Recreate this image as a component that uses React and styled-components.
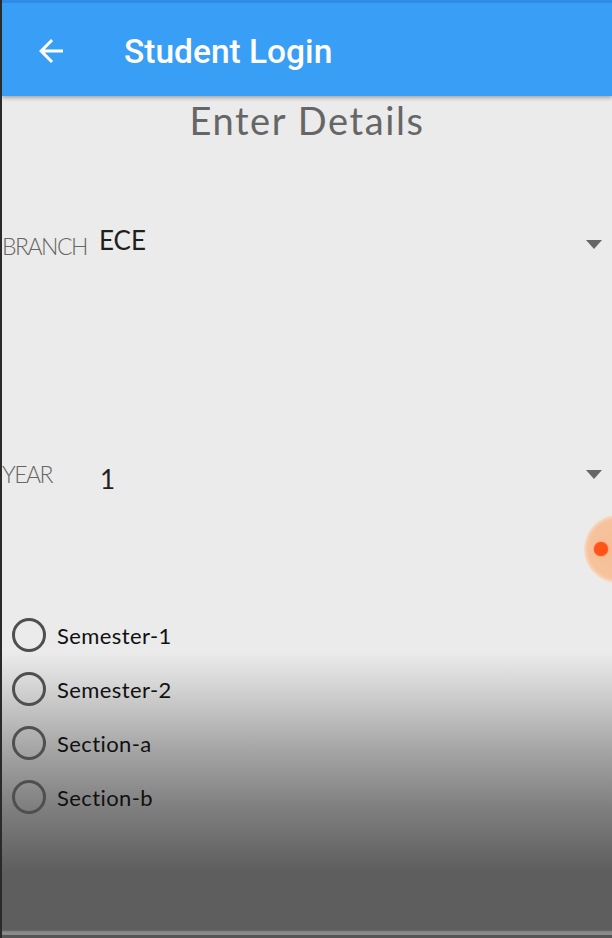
import React from "react";
import styled, { createGlobalStyle } from "styled-components";

const GlobalStyle = createGlobalStyle`
  html, body {
    margin: 0;
    padding: 0;
    background: #5d5d5d;
  }
  * { box-sizing: border-box; }
`;

const Screen = styled.div`
  width: 612px;
  height: 938px;
  display: flex;
  flex-direction: column;
  border-left: 2px solid #2a2a2a;
  overflow: hidden;
  position: relative;
`;

const AppBar = styled.header`
  height: 96px;
  flex-shrink: 0;
  display: flex;
  align-items: center;
  padding-left: 31px;
  background: #399ef5;
  border-top: 3px solid #2f8be8;
  box-shadow: 0 2px 4px rgba(0, 0, 0, 0.3);
  position: relative;
  z-index: 2;
`;

const BackButton = styled.button`
  border: none;
  background: none;
  padding: 0;
  width: 36px;
  height: 36px;
  display: flex;
  align-items: center;
  justify-content: center;
  margin-right: 55px;
  margin-top: 2px;
`;

const Title = styled.h1`
  margin: 0;
  font-family: Roboto, "Liberation Sans", sans-serif;
  font-weight: 500;
  font-size: 33.5px;
  color: #ffffff;
  margin-top: 3px;
`;

const Body = styled.main`
  flex: 1;
  display: flex;
  flex-direction: column;
  position: relative;
  background: linear-gradient(
    to bottom,
    #ebebeb 0,
    #ebebeb 556px,
    #d8d8d8 585px,
    #a8a8a8 650px,
    #808080 710px,
    #5e5e5e 775px,
    #5e5e5e 834px,
    #8a8a8a 836px,
    #8a8a8a 839px,
    #555 839px
  );
`;

const Heading = styled.h2`
  margin: 2px 0 0;
  text-align: center;
  font-family: Lato, "Open Sans", sans-serif;
  font-weight: 400;
  font-size: 38px;
  line-height: 44px;
  letter-spacing: 1.6px;
  color: #666666;
`;

const FieldRow = styled.div`
  display: flex;
  align-items: flex-start;
  height: 34px;
  margin-top: ${(p) => p.$top}px;
  padding-right: 10px;
`;

const FieldLabel = styled.span`
  font-family: Lato, "Open Sans", sans-serif;
  font-weight: 300;
  font-size: 23px;
  letter-spacing: -1.5px;
  color: #666;
  width: ${(p) => p.$width}px;
  margin-top: ${(p) => p.$shift}px;
  flex-shrink: 0;
`;

const FieldValue = styled.span`
  flex: 1;
  font-family: Lato, "Open Sans", sans-serif;
  font-weight: 400;
  font-size: 26px;
  color: #1f1f1f;
  margin-top: ${(p) => p.$shift}px;
`;

const Caret = styled.span`
  width: 0;
  height: 0;
  border-left: 8px solid transparent;
  border-right: 8px solid transparent;
  border-top: 9px solid #666;
  margin-top: ${(p) => p.$shift}px;
`;

const Indicator = styled.div`
  position: absolute;
  right: -40px;
  top: 419px;
  width: 68px;
  height: 68px;
  border-radius: 50%;
  background: radial-gradient(circle, #f5bd93 0, #f6c39e 30px, #f8dcc6 34px);
`;

const IndicatorDot = styled.span`
  position: absolute;
  left: 10px;
  top: 27px;
  width: 14px;
  height: 14px;
  border-radius: 50%;
  background: #ff5418;
  box-shadow: 0 0 2px #ff6a2a;
`;

const RadioList = styled.div`
  display: flex;
  flex-direction: column;
  gap: 22px;
  margin-top: 127px;
  padding-left: 10px;
`;

const RadioRow = styled.label`
  display: flex;
  align-items: center;
  height: 32px;
`;

const RadioCircle = styled.span`
  width: 34px;
  height: 34px;
  border-radius: 50%;
  border: 3px solid #4f4f4f;
  margin-right: 11px;
  flex-shrink: 0;
`;

const RadioText = styled.span`
  font-family: Lato, "Open Sans", sans-serif;
  font-weight: 400;
  font-size: 22px;
  letter-spacing: 0.4px;
  color: #111;
`;

const options = ["Semester-1", "Semester-2", "Section-a", "Section-b"];

export default function App() {
  return (
    <>
      <GlobalStyle />
      <Screen>
        <AppBar>
          <BackButton aria-label="back">
            <svg width="36" height="36" viewBox="0 0 24 24">
              <path d="M20 11H7.83l5.59-5.59L12 4l-8 8 8 8 1.41-1.41L7.83 13H20v-2z" fill="#fff" />
            </svg>
          </BackButton>
          <Title>Student Login</Title>
        </AppBar>
        <Body>
          <Heading>Enter Details</Heading>
          <FieldRow $top={84}>
            <FieldLabel $width={97} $shift={6}>BRANCH</FieldLabel>
            <FieldValue $shift={-2}>ECE</FieldValue>
            <Caret $shift={14} />
          </FieldRow>
          <FieldRow $top={198}>
            <FieldLabel $width={98} $shift={2}>YEAR</FieldLabel>
            <FieldValue $shift={5}>1</FieldValue>
            <Caret $shift={12} />
          </FieldRow>
          <Indicator>
            <IndicatorDot />
          </Indicator>
          <RadioList>
            {options.map((o) => (
              <RadioRow key={o}>
                <RadioCircle />
                <RadioText>{o}</RadioText>
              </RadioRow>
            ))}
          </RadioList>
        </Body>
      </Screen>
    </>
  );
}
